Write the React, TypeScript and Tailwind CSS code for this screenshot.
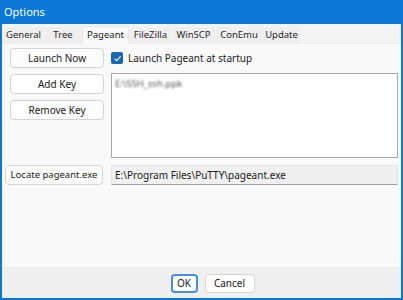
import React from 'react';

const tabs = [
  { t: 'General', w: 'w-[41px]' },
  { t: 'Tree', w: 'w-[36px]' },
  { t: 'Pageant', w: 'w-[47px]' },
  { t: 'FileZilla', w: 'w-[41px]' },
  { t: 'WinSCP', w: 'w-[43px]' },
  { t: 'ConEmu', w: 'w-[46px]' },
  { t: 'Update', w: 'w-[37px]' },
];

function Btn({ children, className = '' }: { children: React.ReactNode; className?: string }) {
  return (
    <div
      className={`flex items-center justify-center rounded-[4px] border border-[#d4d4d4] bg-[#fdfdfd] text-[#1a1a1a] ${className}`}
    >
      {children}
    </div>
  );
}

export default function App() {
  return (
    <div
      className="w-[403px] h-[300px] flex flex-col bg-[#0a78d4] overflow-hidden text-[10px] text-[#1a1a1a]"
      style={{ fontFamily: '"Noto Sans", "Open Sans", sans-serif' }}
    >
      {/* title bar */}
      <div className="h-[24px] shrink-0 flex items-center pl-[4px] text-white text-[11px]">Options</div>

      <div className="flex-1 flex flex-col mx-[2px] mb-[2px] bg-[#f9f9f9]">
        {/* tab strip */}
        <div className="h-[20px] shrink-0 flex items-end gap-[1px] bg-[#f3f3f3] pl-[1px] border-b border-[#ebebeb] text-[9.5px]">
          {tabs.map(({ t, w }) => (
            <div
              key={t}
              className={
                t === 'Pageant'
                  ? `${w} h-[18px] flex items-center justify-center bg-[#f9f9f9] border-x border-t border-[#e5e5e5] rounded-t-[2px] -mb-px`
                  : `${w} h-[16px] flex items-center justify-center bg-[#eeeeee] text-[#2a2a2a]`
              }
            >
              {t}
            </div>
          ))}
        </div>

        {/* page */}
        <div className="flex-1 flex flex-col pt-[4px] pl-[8px] pr-[3px]">
          <div className="flex gap-[7px]">
            <div className="flex flex-col gap-[6px] w-[94px]">
              <Btn className="h-[20px]">Launch Now</Btn>
              <Btn className="h-[20px]">Add Key</Btn>
              <Btn className="h-[20px]">Remove Key</Btn>
            </div>
            <div className="flex-1 flex flex-col">
              <div className="h-[20px] flex items-center gap-[5px]">
                <div className="w-[12px] h-[12px] rounded-[2px] bg-[#1767b8] flex items-center justify-center">
                  <svg width="9" height="9" viewBox="0 0 10 10">
                    <path d="M1.8 5.2 L4 7.3 L8.4 2.6" stroke="white" strokeWidth="1.3" fill="none" />
                  </svg>
                </div>
                <span>Launch Pageant at startup</span>
              </div>
              <div className="mt-[5px] h-[85px] bg-white border border-[#a9a9a9] px-[3px] py-[2px]">
                <span className="blur-[1.2px] text-[#555] text-[9.5px]">E:\SSH_ssh.ppk</span>
              </div>
            </div>
          </div>

          <div className="flex items-center gap-[8px] mt-[7px] -ml-[5px]">
            <Btn className="h-[20px] w-[98px] text-[9.5px]">Locate pageant.exe</Btn>
            <div className="flex-1 h-[20px] flex items-center px-[3px] bg-[#f0f0f0] border border-[#e3e3e3] border-b-[#a0a0a0]">
              E:\Program Files\PuTTY\pageant.exe
            </div>
          </div>
        </div>

        {/* footer */}
        <div className="h-[31px] shrink-0 flex items-center justify-center gap-[7px] pl-[22px] bg-[#f0f0f0] border-t border-[#ebebeb]">
          <div className="h-[19px] w-[27px] flex items-center justify-center rounded-[4px] bg-[#fdfdfd] border-2 border-[#4a8fd6]">
            OK
          </div>
          <Btn className="h-[19px] w-[50px]">Cancel</Btn>
        </div>
      </div>
    </div>
  );
}
